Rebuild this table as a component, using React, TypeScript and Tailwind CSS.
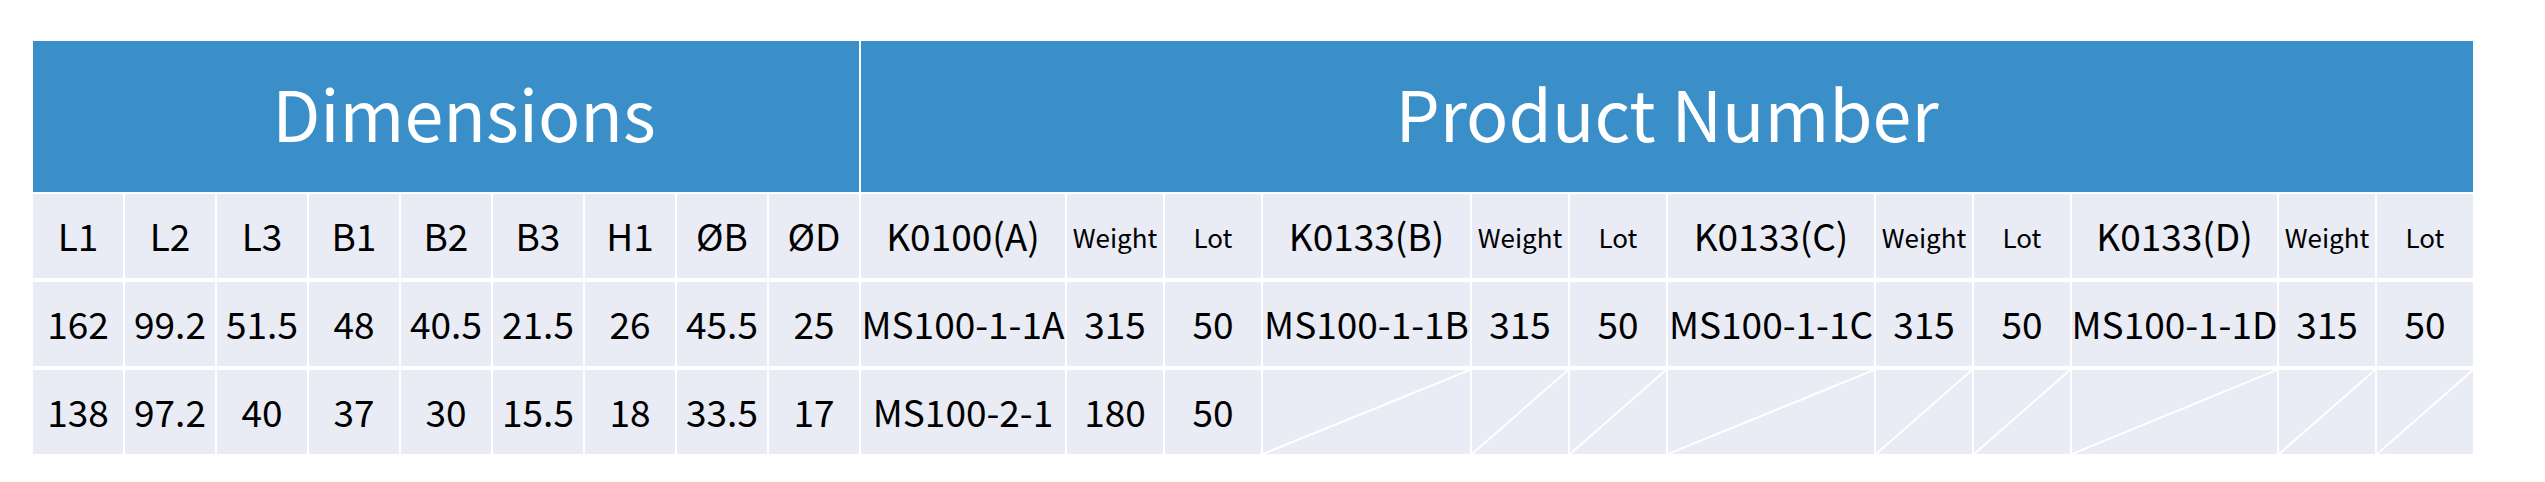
import React from 'react'

const cols =
  'grid grid-cols-[repeat(9,90px)_204px_96px_96px_207px_96px_96px_206px_96px_96px_205px_96px_96px] gap-x-[2px]'

const dims = {
  head: ['L1', 'L2', 'L3', 'B1', 'B2', 'B3', 'H1', 'ØB', 'ØD'],
  r1: ['162', '99.2', '51.5', '48', '40.5', '21.5', '26', '45.5', '25'],
  r2: ['138', '97.2', '40', '37', '30', '15.5', '18', '33.5', '17'],
}

const groups = ['A', 'B', 'C', 'D']

const Cell = ({ children, small }: { children?: React.ReactNode; small?: boolean }) => (
  <div
    className={`flex items-center justify-center bg-[#e9ebf5] text-black whitespace-nowrap ${
      small ? 'text-[26px]' : 'text-[37px]'
    }`}
  >
    {children}
  </div>
)

const Slashed = () => (
  <div className="relative bg-[#e9ebf5]">
    <svg className="absolute inset-0 h-full w-full" preserveAspectRatio="none" viewBox="0 0 100 100">
      <line x1="0" y1="100" x2="100" y2="0" stroke="#fff" strokeWidth="2" vectorEffect="non-scaling-stroke" />
    </svg>
  </div>
)

export default function App() {
  return (
    <div
      className="h-[482px] w-[2545px] bg-white pl-[33px] pt-[41px]"
      style={{ fontFamily: '"Noto Sans CJK SC", "Noto Sans", sans-serif' }}
    >
      <div className="flex flex-col">
        {/* header */}
        <div className={`${cols} h-[151px]`}>
          <div className="col-span-9 flex items-center justify-center bg-[#3a8fc9] pb-[10px] pl-[36px] text-[70px] text-white">
            Dimensions
          </div>
          <div className="col-span-12 flex items-center justify-center bg-[#3a8fc9] pb-[10px] text-[70px] text-white">
            Product Number
          </div>
        </div>

        {/* column titles */}
        <div className={`${cols} mt-[2px] h-[84px]`}>
          {dims.head.map((d) => (
            <Cell key={d}>{d}</Cell>
          ))}
          {groups.map((g) => (
            <React.Fragment key={g}>
              <Cell>{g === 'A' ? 'K0100(A)' : `K0133(${g})`}</Cell>
              <Cell small>Weight</Cell>
              <Cell small>Lot</Cell>
            </React.Fragment>
          ))}
        </div>

        {/* row 1 */}
        <div className={`${cols} mt-[4px] h-[84px]`}>
          {dims.r1.map((d, i) => (
            <Cell key={i}>{d}</Cell>
          ))}
          {groups.map((g) => (
            <React.Fragment key={g}>
              <Cell>{`MS100-1-1${g}`}</Cell>
              <Cell>315</Cell>
              <Cell>50</Cell>
            </React.Fragment>
          ))}
        </div>

        {/* row 2 */}
        <div className={`${cols} mt-[4px] h-[84px]`}>
          {dims.r2.map((d, i) => (
            <Cell key={i}>{d}</Cell>
          ))}
          <Cell>MS100-2-1</Cell>
          <Cell>180</Cell>
          <Cell>50</Cell>
          {Array.from({ length: 9 }).map((_, i) => (
            <Slashed key={i} />
          ))}
        </div>
      </div>
    </div>
  )
}
